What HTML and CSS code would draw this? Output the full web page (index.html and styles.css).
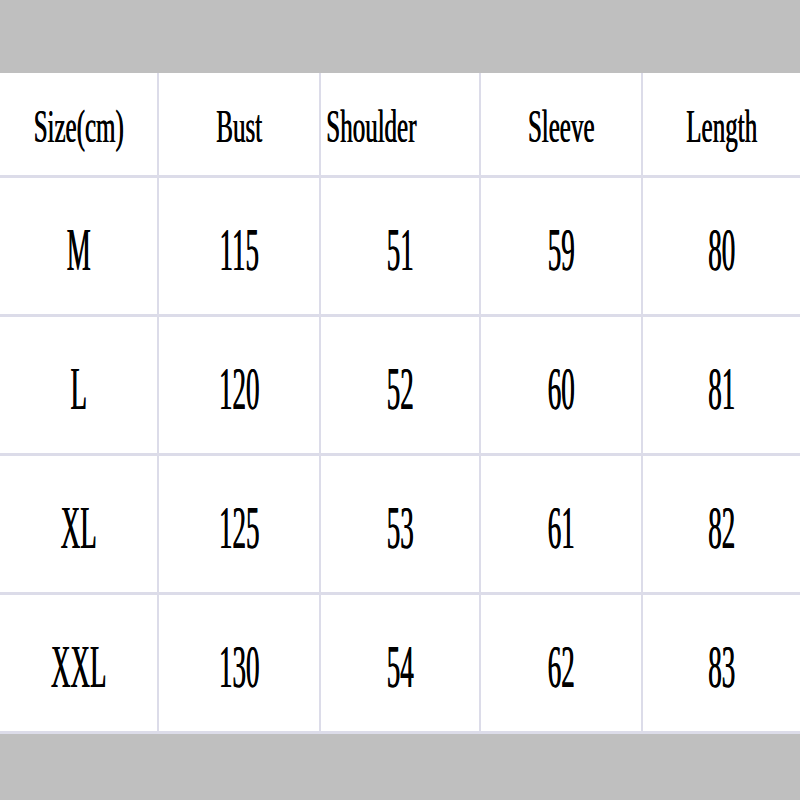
FILE: index.html
```html
<!DOCTYPE html>
<html>
<head>
<meta charset="utf-8">
<link rel="stylesheet" href="styles.css">
</head>
<body>
<div class="band band-top"></div>
<div class="chart">
  <div class="cell head"><span>Size(cm)</span></div>
  <div class="cell head"><span>Bust</span></div>
  <div class="cell head left"><span>Shoulder</span></div>
  <div class="cell head"><span>Sleeve</span></div>
  <div class="cell head"><span>Length</span></div>

  <div class="cell"><span>M</span></div>
  <div class="cell"><span>115</span></div>
  <div class="cell"><span>51</span></div>
  <div class="cell"><span>59</span></div>
  <div class="cell"><span>80</span></div>

  <div class="cell"><span>L</span></div>
  <div class="cell"><span>120</span></div>
  <div class="cell"><span>52</span></div>
  <div class="cell"><span>60</span></div>
  <div class="cell"><span>81</span></div>

  <div class="cell"><span>XL</span></div>
  <div class="cell"><span>125</span></div>
  <div class="cell"><span>53</span></div>
  <div class="cell"><span>61</span></div>
  <div class="cell"><span>82</span></div>

  <div class="cell"><span>XXL</span></div>
  <div class="cell"><span>130</span></div>
  <div class="cell"><span>54</span></div>
  <div class="cell"><span>62</span></div>
  <div class="cell"><span>83</span></div>
</div>
<div class="band band-bottom"></div>
</body>
</html>
```
FILE: styles.css
```css
html, body {
  margin: 0;
  padding: 0;
  background: #bfbfbf;
  width: 800px;
  height: 800px;
  overflow: hidden;
}

.band-top {
  height: 73px;
  background: #bfbfbf;
}

.chart {
  display: grid;
  grid-template-columns: 157px 160px 158px 160px 1fr;
  grid-template-rows: 102px repeat(4, 136px);
  column-gap: 2px;
  row-gap: 3px;
  background: #dcdce9;
  padding-bottom: 3px;
}

.cell {
  background: #ffffff;
  display: flex;
  align-items: center;
  justify-content: center;
  font-family: "Liberation Serif", "Times New Roman", serif;
  color: #000;
  font-size: 27px;
  line-height: 1;
  overflow: visible;
  text-shadow: 0.5px 0 0 #000;
}

.cell span {
  display: inline-block;
  transform: scaleY(2.3);
  position: relative;
  top: 4px;
}

.cell.head {
  font-size: 25px;
}

.cell.head span {
  transform: scaleY(1.85);
  top: 2px;
}

.cell.left {
  justify-content: flex-start;
  padding-left: 5px;
}

.band-bottom {
  height: 70px;
  background: #bfbfbf;
}
```
